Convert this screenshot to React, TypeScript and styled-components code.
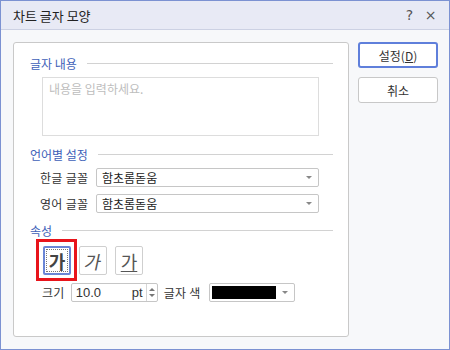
import React from 'react';
import styled, { createGlobalStyle } from 'styled-components';

const GlobalStyle = createGlobalStyle`
  html, body {
    margin: 0;
    padding: 0;
    background: #ffffff;
  }
  body {
    font-family: "Noto Sans CJK KR", "Noto Sans", sans-serif;
    font-size: 12px;
    color: #333333;
  }
`;

const Window = styled.div`
  width: 450px;
  height: 350px;
  box-sizing: border-box;
  border: 1px solid #7c92d2;
  background: #f7f8fa;
  display: flex;
  flex-direction: column;
`;

const TitleBar = styled.div`
  height: 28px;
  flex-shrink: 0;
  display: flex;
  align-items: center;
  padding: 0 8px 0 12px;
  background: #e8eaf5;
  border-bottom: 1px solid #ccd1e3;
`;

const Title = styled.span`
  flex: 1;
  font-size: 13px;
  color: #222222;
`;

const TitleIcon = styled.span`
  width: 21px;
  text-align: center;
  font-size: 14px;
  color: #555555;
  font-family: "DejaVu Sans", sans-serif;
`;

const Body = styled.div`
  flex: 1;
  display: flex;
  gap: 9px;
  padding: 12px 11px 12px 12px;
`;

const Panel = styled.div`
  flex: 1;
  background: #ffffff;
  border: 1px solid #c9c9c9;
  border-radius: 3px;
  padding: 12px 15px 0 16px;
  display: flex;
  flex-direction: column;
`;

const Side = styled.div`
  width: 80px;
  display: flex;
  flex-direction: column;
  gap: 9px;
`;

const Button = styled.button<{ $primary?: boolean }>`
  height: 26px;
  box-sizing: border-box;
  background: #ffffff;
  border: ${(p) => (p.$primary ? '2px solid #5f7fdb' : '1px solid #c8c8c8')};
  border-radius: 3px;
  font-family: "Noto Sans CJK KR", sans-serif;
  font-size: 12px;
  color: #333333;
  padding: 0;
  cursor: pointer;
`;

const SectionHead = styled.div<{ $top?: number }>`
  display: flex;
  align-items: center;
  height: 16px;
  margin-top: ${(p) => p.$top ?? 0}px;
  color: #3e5fb8;
  font-size: 12px;
  &::after {
    content: '';
    flex: 1;
    height: 1px;
    background: #d2d2d2;
    margin-left: 10px;
  }
`;

const TextArea = styled.div`
  margin: 6px 0 0 12px;
  width: 277px;
  height: 59px;
  box-sizing: border-box;
  border: 1px solid #dddddd;
  padding: 2px 6px;
  color: #bdbdbd;
  font-size: 12px;
`;

const Rows = styled.div`
  display: flex;
  flex-direction: column;
  gap: 7px;
  margin: 6px 0 0 10px;
`;

const Row = styled.div`
  display: flex;
  align-items: center;
  gap: 6px;
`;

const Label = styled.span`
  width: 50px;
  font-size: 12px;
  letter-spacing: 0.3px;
  color: #333333;
  white-space: nowrap;
`;

const Select = styled.div`
  width: 223px;
  height: 19px;
  box-sizing: border-box;
  border: 1px solid #c6c6c6;
  border-radius: 2px;
  display: flex;
  align-items: center;
  padding: 0 6px 0 5px;
  font-size: 12px;
  color: #222222;
  span {
    flex: 1;
  }
`;

const Caret = styled.i`
  width: 0;
  height: 0;
  border-left: 3px solid transparent;
  border-right: 3px solid transparent;
  border-top: 3px solid #888888;
`;

const StyleRow = styled.div`
  display: flex;
  gap: 8px;
  margin: 8px 0 0 13px;
`;

const Focus = styled.div`
  position: relative;
  display: flex;
  &::before {
    content: '';
    position: absolute;
    left: -7px;
    top: -7px;
    right: -6px;
    bottom: -6px;
    border: 3px solid #e8141b;
    pointer-events: none;
  }
`;

const StyleButton = styled.div<{ $active?: boolean }>`
  width: 28px;
  height: 29px;
  box-sizing: border-box;
  border: ${(p) => (p.$active ? '2px solid #6a86d6' : '1px solid #cfcfcf')};
  border-radius: 2px;
  background: #ffffff;
  display: flex;
  align-items: center;
  justify-content: center;
  font-size: 18px;
  color: #555555;
  position: relative;
  ${(p) =>
    p.$active &&
    `&::after {
      content: '';
      position: absolute;
      inset: 1px;
      border: 1px dotted #777777;
    }`}
`;

const Glyph = styled.span<{ $kind: 'bold' | 'italic' | 'underline' }>`
  font-weight: ${(p) => (p.$kind === 'bold' ? 700 : 400)};
  color: ${(p) => (p.$kind === 'bold' ? '#444444' : '#555555')};
  display: inline-block;
  transform: ${(p) => (p.$kind === 'italic' ? 'skewX(-12deg)' : 'none')};
  text-decoration: ${(p) => (p.$kind === 'underline' ? 'underline' : 'none')};
  text-underline-offset: 2px;
  line-height: 1;
`;

const SizeRow = styled.div`
  display: flex;
  align-items: center;
  gap: 6px;
  margin: 8px 0 0 12px;
`;

const SmallLabel = styled.span`
  font-size: 12px;
  letter-spacing: 0.3px;
  color: #333333;
  white-space: nowrap;
`;

const SizeBox = styled.div`
  width: 87px;
  height: 19px;
  box-sizing: border-box;
  border: 1px solid #c6c6c6;
  border-radius: 2px;
  display: flex;
  align-items: center;
  font-family: "Liberation Sans", Arial, sans-serif;
  font-size: 13px;
  color: #333333;
`;

const SizeValue = styled.span`
  flex: 1;
  padding-left: 4px;
`;

const Unit = styled.span`
  padding-right: 3px;
`;

const Spinner = styled.div`
  width: 10px;
  height: 100%;
  border-left: 1px solid #d6d6d6;
  display: flex;
  flex-direction: column;
  align-items: center;
  justify-content: center;
  gap: 3px;
`;

const Arrow = styled.i<{ $up?: boolean }>`
  width: 0;
  height: 0;
  border-left: 3px solid transparent;
  border-right: 3px solid transparent;
  ${(p) => (p.$up ? 'border-bottom: 3px solid #777777;' : 'border-top: 3px solid #777777;')}
`;

const ColorBox = styled.div`
  width: 86px;
  height: 19px;
  box-sizing: border-box;
  border: 1px solid #c6c6c6;
  border-radius: 2px;
  display: flex;
  align-items: center;
  padding: 2px 6px 2px 2px;
  gap: 6px;
  margin-left: 2px;
`;

const Swatch = styled.div`
  flex: 1;
  height: 13px;
  background: #000000;
`;

export default function App() {
  return (
    <>
      <GlobalStyle />
      <Window>
        <TitleBar>
          <Title>차트 글자 모양</Title>
          <TitleIcon>?</TitleIcon>
          <TitleIcon>×</TitleIcon>
        </TitleBar>
        <Body>
          <Panel>
            <SectionHead>글자 내용</SectionHead>
            <TextArea>내용을 입력하세요.</TextArea>

            <SectionHead $top={10}>언어별 설정</SectionHead>
            <Rows>
              <Row>
                <Label>한글 글꼴</Label>
                <Select>
                  <span>함초롬돋움</span>
                  <Caret />
                </Select>
              </Row>
              <Row>
                <Label>영어 글꼴</Label>
                <Select>
                  <span>함초롬돋움</span>
                  <Caret />
                </Select>
              </Row>
            </Rows>

            <SectionHead $top={9}>속성</SectionHead>
            <StyleRow>
              <Focus>
                <StyleButton $active>
                  <Glyph $kind="bold">가</Glyph>
                </StyleButton>
              </Focus>
              <StyleButton>
                <Glyph $kind="italic">가</Glyph>
              </StyleButton>
              <StyleButton>
                <Glyph $kind="underline">가</Glyph>
              </StyleButton>
            </StyleRow>

            <SizeRow>
              <SmallLabel>크기</SmallLabel>
              <SizeBox>
                <SizeValue>10.0</SizeValue>
                <Unit>pt</Unit>
                <Spinner>
                  <Arrow $up />
                  <Arrow />
                </Spinner>
              </SizeBox>
              <SmallLabel>글자 색</SmallLabel>
              <ColorBox>
                <Swatch />
                <Caret />
              </ColorBox>
            </SizeRow>
          </Panel>
          <Side>
            <Button $primary>설정(<u>D</u>)</Button>
            <Button>취소</Button>
          </Side>
        </Body>
      </Window>
    </>
  );
}
